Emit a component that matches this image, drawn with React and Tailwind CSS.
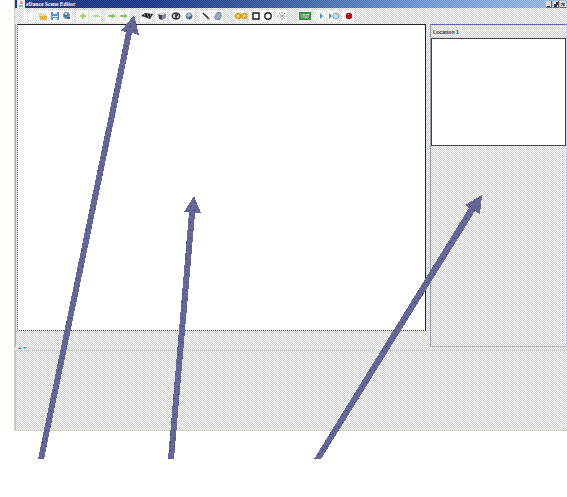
import React from "react";

const DITHER =
  "bg-[conic-gradient(from_270deg_at_1px_1px,#fff_90deg,transparent_0),conic-gradient(from_270deg_at_1px_1px,#fff_90deg,transparent_0),conic-gradient(#fff_25%,#ccc_0_50%,#fff_0_75%,#ccc_0)] bg-[length:8px_8px,8px_8px,2px_2px] bg-[position:2px_2px,6px_6px,0px_0px]";

function Sphere() {
  return (
    <>
      <circle cx="6" cy="6" r="3.5" fill="#7889ad" />
      <path d="M3 5l3-2 3 2-3 2z" fill="#a9bfdc" />
      <path d="M6 7v3l3-2V5z" fill="#546383" />
    </>
  );
}

const ICONS = {
  page: <path d="M3.5 1.5h4l2 2v7h-6z" fill="#fff" stroke="#ddd" />,
  folder: (
    <>
      <path d="M2 3h3l1 1h3v2H2z" fill="#f4d58b" />
      <path d="M2 6h8v4H3z" fill="#e9b443" />
    </>
  ),
  save: (
    <>
      <path d="M2 2h8v8H2z" fill="#5b91cf" />
      <path d="M4 2h4v2H4zM3 6h6v1H3zM4 8h4v2H4z" fill="#e5f0fa" />
    </>
  ),
  globe: (
    <>
      <circle cx="5.5" cy="5.5" r="3.5" fill="#6697bd" />
      <path d="M3 4l3-1 1 3-3 1zM6 7h3v2H6z" fill="#4c606d" />
      <path d="M4 3h2v2H4z" fill="#c3dded" />
    </>
  ),
  plus: <path d="M6 3v6M3 6h6" stroke="#a5d96f" strokeWidth="2" />,
  minus: <path d="M3 6h6" stroke="#b3dd8e" strokeWidth="2" />,
  arrow: (
    <>
      <path d="M2 5h4V3l4 3-4 3V7H2z" fill="#a9d88d" />
      <path d="M3 6h6" stroke="#6aa354" />
    </>
  ),
  film: (
    <>
      <path d="M0 6l4-3 8 1-3 5-3-1-2-1z" fill="#252525" />
      <path d="M3 5h1M6 5h1M9 5h1M7 7h1" stroke="#ddd" />
    </>
  ),
  cube: (
    <>
      <path d="M2 4l4 1v5L3 9z" fill="#444" />
      <path d="M6 5l4-2v5l-4 2z" fill="#8989a0" />
      <path d="M2 4l4-2 4 1-4 2z" fill="#ddd" />
    </>
  ),
  turn: (
    <>
      <ellipse cx="6" cy="6" rx="3.7" ry="3" fill="#ddd" stroke="#333" strokeWidth="1.5" />
      <path d="M5 4h3v2H7v3H5z" fill="#444" />
    </>
  ),
  sphere: <Sphere />,
  pen: (
    <>
      <path d="M3 3l6 6" stroke="#333" strokeWidth="1.7" />
      <path d="M3 5l2-2M7 9h3" stroke="#999" />
    </>
  ),
  head: (
    <>
      <path d="M3 5l2-3h4l1 4-2 4H4L2 8z" fill="#8c96a8" />
      <path d="M5 4h3v3H5z" fill="#78bcd8" />
      <path d="M4 7h2v2H4z" fill="#bb9bb4" />
    </>
  ),
  rings: (
    <>
      <circle cx="3" cy="6" r="2.5" fill="#f7df78" stroke="#d59b16" strokeWidth="1.7" />
      <circle cx="9" cy="6" r="2.5" fill="#f7df78" stroke="#d59b16" strokeWidth="1.7" />
    </>
  ),
  square: <path d="M3 3h6v6H3z" fill="#fff" stroke="#222" strokeWidth="1.5" />,
  circle: <circle cx="6" cy="6" r="3.2" fill="#fff" stroke="#222" strokeWidth="1.4" />,
  burst: (
    <path d="M1 6h10M3 3l6 6M9 3L3 9M6 2v8" stroke="#999" strokeDasharray="2 1" />
  ),
  board: (
    <>
      <path d="M0 2h12v8H0z" fill="#3b944b" />
      <path d="M2 4h8v4H2z" fill="#d2e2d0" />
      <path d="M3 4v4M5 5v3M7 4v3M9 5v3" stroke="#406947" />
    </>
  ),
  play: <path d="M5 3l3 3-3 3z" fill="#3d91dc" />,
  playWorld: (
    <>
      <path d="M1 3l3 3-3 3z" fill="#3d91dc" />
      <circle cx="8" cy="6" r="3" fill="#c4e2f4" stroke="#68a8d2" />
      <path d="M8 3h2v2H8z" fill="#edb34b" />
    </>
  ),
  record: (
    <>
      <circle cx="6" cy="6" r="3.2" fill="#b50b15" />
      <path d="M5 4h1v1H5z" fill="#f48484" />
    </>
  ),
};

const TOOLS = [
  ["page", "ml-[8px]"],
  ["folder", "ml-[1px]"],
  ["save", ""],
  ["globe", ""],
  ["plus", "ml-[4px]"],
  ["minus", "ml-[1px]"],
  ["arrow", "ml-[4px]"],
  ["arrow", ""],
  ["film", "ml-[11px]"],
  ["cube", "ml-[3px]"],
  ["turn", "ml-[2px]"],
  ["sphere", "ml-[1px]"],
  ["pen", "ml-[5px]"],
  ["head", ""],
  ["rings", "ml-[11px]"],
  ["square", "ml-[3px]"],
  ["circle", ""],
  ["burst", "ml-[2px]"],
  ["board", "ml-[11px]"],
  ["play", "ml-[4px]"],
  ["playWorld", "ml-[1px]"],
  ["record", "ml-[3px]"],
];

function TitleBar() {
  return (
    <header className="flex h-[8px] shrink-0 items-center bg-[conic-gradient(#ffffff20_25%,#00003828_0_50%,#ffffff20_0_75%,#00003828_0),linear-gradient(90deg,#153080_0%,#17378b_24%,#3c67aa_50%,#78a5df_76%,#a3c8f0_100%)] bg-[length:2px_2px,100%_100%]">
      <svg viewBox="0 0 8 8" className="ml-[2px] size-[8px] shrink-0">
        <path d="M0 0h8v8H0z" fill="#e6edf4" />
        <path d="M4 1v3M5 2v2" stroke="#dd7445" />
        <path d="M2 6h4" stroke="#5778a4" />
      </svg>
      <h1 className="ml-[1px] font-['Liberation_Serif',serif] text-[5.6px] leading-[8px] font-bold whitespace-nowrap text-white">
        eDance Scene Editor
      </h1>
      <svg viewBox="0 0 22 7" shapeRendering="crispEdges" className="ml-auto h-[7px] w-[22px] shrink-0">
        <path d="M1 0h6v7H1zM8 0h6v7H8zM15 0h6v7h-6z" fill="#ddd9cf" />
        <path d="M2 5h3v1H2zM9 3h3v3H9zM11 1h2v3h-2z" fill="#333" />
        <path d="M16 2l4 3M20 2l-4 3" stroke="#555" />
        <path d="M1 6h6v1H1zM8 6h6v1H8zM15 6h6v1h-6zM6 0h1v7H6zM13 0h1v7h-1z" fill="#666" />
      </svg>
    </header>
  );
}

function Toolbar() {
  return (
    <nav className={`flex h-[16px] shrink-0 items-center ${DITHER}`}>
      {TOOLS.map(([name, gap], i) => (
        <span
          key={i}
          className={`flex h-[12px] w-[12px] shrink-0 items-center bg-[conic-gradient(#fff_75%,#e3e3e3_0)] bg-[length:2px_2px] ${gap}`}
        >
          <svg viewBox="0 0 12 12" className="ml-[1px] size-[12px] shrink-0 overflow-visible">
            {ICONS[name]}
          </svg>
        </span>
      ))}
    </nav>
  );
}

function Arrows() {
  return (
    <svg
      viewBox="0 0 567 497"
      shapeRendering="crispEdges"
      className="pointer-events-none absolute inset-0 h-[497px] w-[567px]"
    >
      <defs>
        <pattern id="ink" width="8" height="8" patternUnits="userSpaceOnUse">
          <path d="M0 0h8v8H0z" fill="#666699" />
          <path d="M2 2h1v1H2zM6 6h1v1H6z" fill="#333366" />
        </pattern>
      </defs>
      <g fill="url(#ink)">
        <path d="M134 15l-13 16 5 1L38 459h6L132 33l7 2z" />
        <path d="M194 196l-10 16h5L168 459h6L195 213h6z" />
        <path d="M482 195l-17 10 4 3L314 459h7L475 211l5 3z" />
      </g>
    </svg>
  );
}

export default function App() {
  return (
    <main className="relative h-[497px] w-[567px] overflow-hidden bg-white pl-[14px]">
      <div
        className={`flex h-[431px] flex-col border-b border-l border-[#d4d2bb] ${DITHER}`}
      >
        <TitleBar />
        <Toolbar />
        <section className="flex h-[323px] shrink-0 border-l border-[#aaaabd] pl-[1px]">
          <div className="h-[307px] w-[409px] shrink-0 border border-t-[#222] border-r-[#222] border-b-[#333] border-l-[#357879] bg-white [border-style:solid_solid_dotted_dotted]" />
          <aside className="ml-[4px] flex w-[137px] flex-col border border-t-[#6262ad] border-r-[#ccccec] border-b-[#bbb] border-l-[#909cb0]">
            <h2 className="h-[13px] shrink-0 pl-[2px] font-['Liberation_Sans',sans-serif] text-[5.2px] leading-[15px] font-bold text-[#333]">
              Location 1
            </h2>
            <div className="h-[108px] shrink-0 border border-[#444] bg-white" />
          </aside>
        </section>
        <div className="flex h-[4px] shrink-0 items-center border-b border-[#c9d3d3] pl-[3px]">
          <svg viewBox="0 0 10 3" className="h-[3px] w-[10px]">
            <path d="M0 2h4L2 0zM5 0h4L7 2z" fill="#3d89b8" />
          </svg>
        </div>
        <section className="flex-1 border-l border-[#c4bed8]" />
      </div>
      <Arrows />
    </main>
  );
}
